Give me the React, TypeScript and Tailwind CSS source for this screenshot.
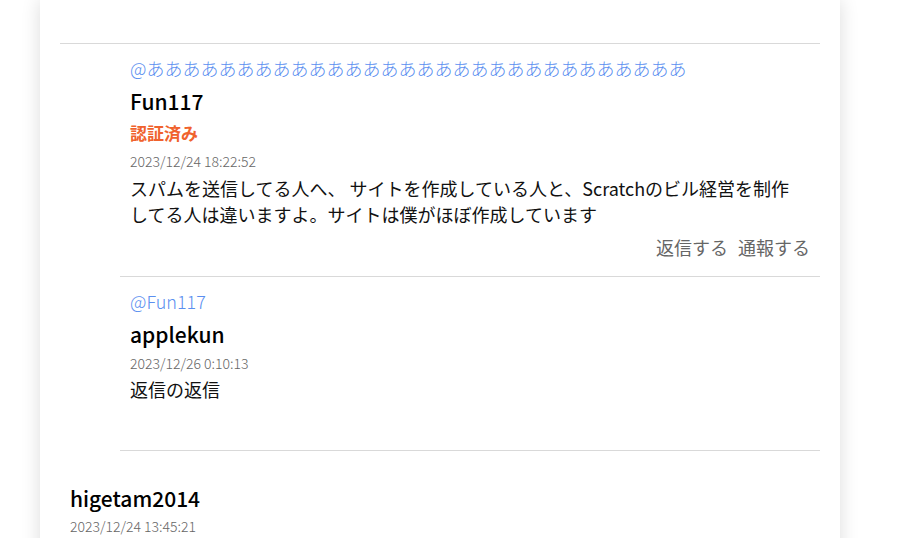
const FONT = { fontFamily: '"Noto Sans CJK JP", "Noto Sans", sans-serif' };

interface Reply {
  mention: string;
  name: string;
  verified?: boolean;
  date: string;
  body: string[];
  actions?: boolean;
}

const replies: Reply[] = [
  {
    mention: '@' + 'あ'.repeat(30),
    name: 'Fun117',
    verified: true,
    date: '2023/12/24 18:22:52',
    body: [
      'スパムを送信してる人へ、 サイトを作成している人と、Scratchのビル経営を制作',
      'してる人は違いますよ。サイトは僕がほぼ作成しています',
    ],
    actions: true,
  },
  {
    mention: '@Fun117',
    name: 'applekun',
    date: '2023/12/26 0:10:13',
    body: ['返信の返信'],
  },
];

function ReplyItem({ r }: { r: Reply }) {
  return (
    <div className="border-b border-[#d9d9d9] px-[10px]">
      <div className="mt-[11px] text-[18px] leading-[26px] text-[#5b8ff0] font-light">{r.mention}</div>
      <div className="mt-[5px] text-[21px] leading-[30px] font-medium text-black">{r.name}</div>
      {r.verified && (
        <div className="mt-1 text-[17px] leading-[26px] font-bold text-[#f0622d]">認証済み</div>
      )}
      <div className={(r.verified ? 'mt-[6px]' : 'mt-[5px]') + ' text-[14px] leading-[18px] text-[#666] font-light'}>
        {r.date}
      </div>
      <div className={(r.verified ? 'mt-[5px]' : 'mt-[4px]') + ' text-[18px] leading-[26px] text-[#111]'}>
        {r.body.map((l, i) => (
          <div key={i}>{l}</div>
        ))}
      </div>
      {r.actions ? (
        <div className="mt-[7px] mb-4 flex justify-end gap-[10px] text-[18px] leading-[26px] text-[#666]">
          <span>返信する</span>
          <span>通報する</span>
        </div>
      ) : (
        <div className="h-[48px]" />
      )}
    </div>
  );
}

export default function App() {
  return (
    <div className="min-h-screen bg-white overflow-hidden" style={FONT}>
      <div className="mx-10 w-[800px] bg-white shadow-[0_0_18px_rgba(0,0,0,0.14)] px-5 pt-[43px] min-h-[600px]">
        <div className="border-t border-[#d9d9d9]">
          <div className="ml-[60px]">
            {replies.map((r, i) => (
              <ReplyItem key={i} r={r} />
            ))}
          </div>
          <div className="px-[10px] pt-8">
            <div className="text-[21px] leading-[30px] font-medium text-black">higetam2014</div>
            <div className="mt-1 text-[14px] leading-[18px] text-[#666] font-light">2023/12/24 13:45:21</div>
          </div>
        </div>
      </div>
    </div>
  );
}
